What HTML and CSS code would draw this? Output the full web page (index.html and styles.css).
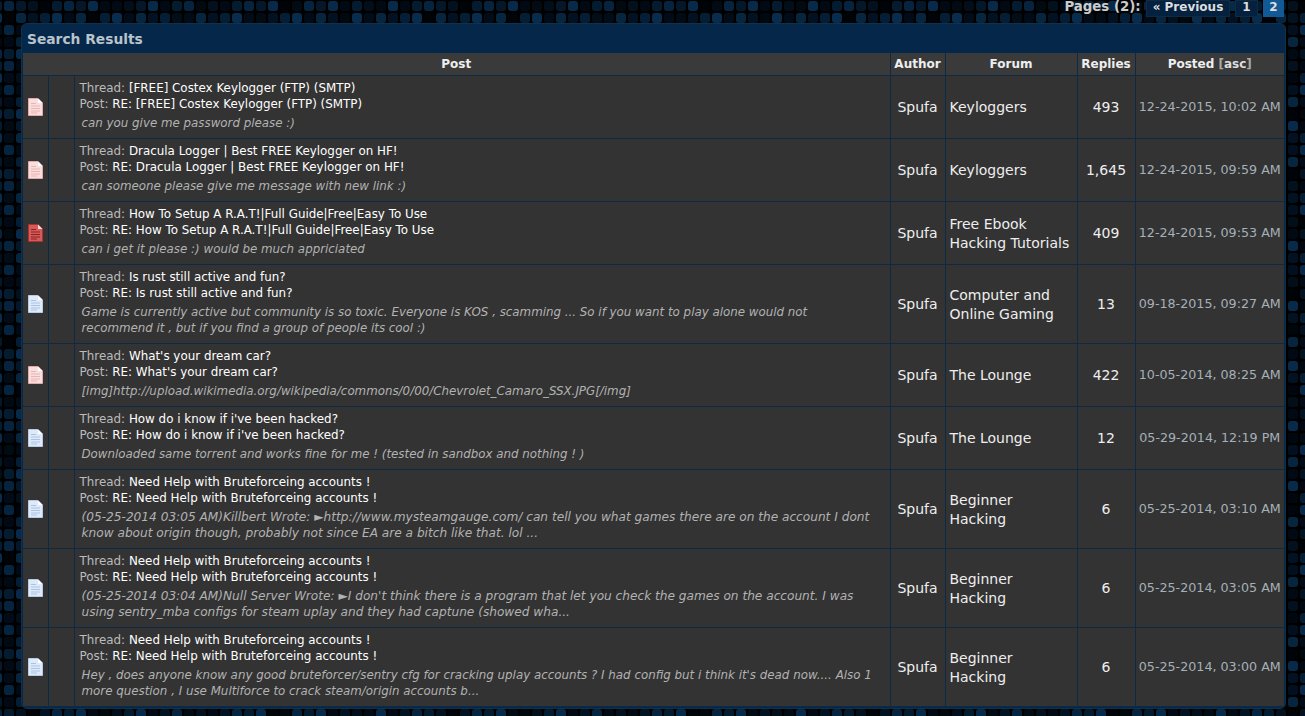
FILE: index.html
```html
<!DOCTYPE html>
<html lang="en">
<head>
    <meta charset="UTF-8">
    <title>Search Results</title>
    <link rel="stylesheet" href="styles.css">
</head>
<body>
    <svg class="page-bg" width="1305" height="716">
        <defs>
            <pattern id="dots" width="60" height="60" patternUnits="userSpaceOnUse" patternTransform="translate(4 1)">
                <rect width="60" height="60" fill="#000"/>
                <rect x="0" y="0" width="10" height="10" rx="3" fill="#06243f"/>
                <rect x="12" y="0" width="10" height="10" rx="3" fill="#04182a"/>
                <rect x="24" y="0" width="10" height="10" rx="3" fill="#072a4a"/>
                <rect x="36" y="0" width="10" height="10" rx="3" fill="#010a14"/>
                <rect x="48" y="0" width="10" height="10" rx="3" fill="#041c32"/>
                <rect x="0" y="12" width="10" height="10" rx="3" fill="#010c18"/>
                <rect x="12" y="12" width="10" height="10" rx="3" fill="#06263f"/>
                <rect x="24" y="12" width="10" height="10" rx="3" fill="#021222"/>
                <rect x="36" y="12" width="10" height="10" rx="3" fill="#041e36"/>
                <rect x="48" y="12" width="10" height="10" rx="3" fill="#072c4e"/>
                <rect x="0" y="24" width="10" height="10" rx="3" fill="#052440"/>
                <rect x="12" y="24" width="10" height="10" rx="3" fill="#010a14"/>
                <rect x="24" y="24" width="10" height="10" rx="3" fill="#020f1e"/>
                <rect x="36" y="24" width="10" height="10" rx="3" fill="#072a4a"/>
                <rect x="48" y="24" width="10" height="10" rx="3" fill="#010c18"/>
                <rect x="0" y="36" width="10" height="10" rx="3" fill="#010a14"/>
                <rect x="12" y="36" width="10" height="10" rx="3" fill="#041e36"/>
                <rect x="24" y="36" width="10" height="10" rx="3" fill="#06263f"/>
                <rect x="36" y="36" width="10" height="10" rx="3" fill="#010c18"/>
                <rect x="48" y="36" width="10" height="10" rx="3" fill="#03182a"/>
                <rect x="0" y="48" width="10" height="10" rx="3" fill="#041c30"/>
                <rect x="12" y="48" width="10" height="10" rx="3" fill="#072a4a"/>
                <rect x="24" y="48" width="10" height="10" rx="3" fill="#010a14"/>
                <rect x="36" y="48" width="10" height="10" rx="3" fill="#021424"/>
                <rect x="48" y="48" width="10" height="10" rx="3" fill="#06243f"/>
            </pattern>
            <pattern id="shade" width="84" height="108" patternUnits="userSpaceOnUse" patternTransform="translate(4 1)">
                <rect x="0" y="12" width="10" height="10" fill="#000" fill-opacity=".7"/>
                <rect x="24" y="0" width="22" height="10" fill="#000" fill-opacity=".6"/>
                <rect x="48" y="36" width="34" height="10" fill="#000" fill-opacity=".65"/>
                <rect x="12" y="60" width="22" height="22" fill="#000" fill-opacity=".6"/>
                <rect x="60" y="84" width="10" height="22" fill="#000" fill-opacity=".7"/>
            </pattern>
            <symbol id="doc" viewBox="0 0 15 18">
                <path class="doc-body" d="M.5.5h9.500l4.500 4.500v12.500h-14z"/>
                <path class="doc-fold" d="M10 .5v4.500h4.500z"/>
                <path class="doc-lines" d="M3 5.500h5M3 8h9M3 10.500h9M3 13h9M3 15h6"/>
            </symbol>
        </defs>
        <rect width="1305" height="716" fill="url(#dots)"/>
        <rect width="1305" height="716" fill="url(#shade)"/>
    </svg>

    <div class="pagination">
        <span class="pages-label">Pages (2):</span>
        <a class="page-link prev">« Previous</a>
        <a class="page-link">1</a>
        <span class="page-current">2</span>
    </div>

    <div class="panel">
        <div class="panel-title">Search Results</div>
        <table class="results">
            <colgroup>
                <col class="c-icon"><col class="c-icon2"><col class="c-post"><col class="c-author"><col class="c-forum"><col class="c-replies"><col class="c-date">
            </colgroup>
            <thead>
                <tr>
                    <th colspan="3">Post</th>
                    <th>Author</th>
                    <th>Forum</th>
                    <th>Replies</th>
                    <th>Posted <span class="sort">[<a>asc</a>]</span></th>
                </tr>
            </thead>
            <tbody>
                <tr>
                    <td class="icon"><svg class="doc hot" width="15" height="18"><use href="#doc"/></svg></td>
                    <td></td>
                    <td class="post">
                        <div>Thread: <a>[FREE] Costex Keylogger (FTP) (SMTP)</a></div>
                        <div>Post: <a>RE: [FREE] Costex Keylogger (FTP) (SMTP)</a></div>
                        <p>can you give me password please :)</p>
                    </td>
                    <td class="author">Spufa</td>
                    <td class="forum">Keyloggers</td>
                    <td class="replies">493</td>
                    <td class="date">12-24-2015, 10:02 AM</td>
                </tr>
                <tr>
                    <td class="icon"><svg class="doc hot" width="15" height="18"><use href="#doc"/></svg></td>
                    <td></td>
                    <td class="post">
                        <div>Thread: <a>Dracula Logger | Best FREE Keylogger on HF!</a></div>
                        <div>Post: <a>RE: Dracula Logger | Best FREE Keylogger on HF!</a></div>
                        <p>can someone please give me message with new link :)</p>
                    </td>
                    <td class="author">Spufa</td>
                    <td class="forum">Keyloggers</td>
                    <td class="replies">1,645</td>
                    <td class="date">12-24-2015, 09:59 AM</td>
                </tr>
                <tr>
                    <td class="icon"><svg class="doc fire" width="15" height="18"><use href="#doc"/></svg></td>
                    <td></td>
                    <td class="post">
                        <div>Thread: <a>How To Setup A R.A.T!|Full Guide|Free|Easy To Use</a></div>
                        <div>Post: <a>RE: How To Setup A R.A.T!|Full Guide|Free|Easy To Use</a></div>
                        <p>can i get it please :) would be much appriciated</p>
                    </td>
                    <td class="author">Spufa</td>
                    <td class="forum">Free Ebook<br>Hacking Tutorials</td>
                    <td class="replies">409</td>
                    <td class="date">12-24-2015, 09:53 AM</td>
                </tr>
                <tr>
                    <td class="icon"><svg class="doc" width="15" height="18"><use href="#doc"/></svg></td>
                    <td></td>
                    <td class="post">
                        <div>Thread: <a>Is rust still active and fun?</a></div>
                        <div>Post: <a>RE: Is rust still active and fun?</a></div>
                        <p>Game is currently active but community is so toxic. Everyone is KOS , scamming ... So if you want to play alone would not recommend it , but if you find a group of people its cool :)</p>
                    </td>
                    <td class="author">Spufa</td>
                    <td class="forum">Computer and<br>Online Gaming</td>
                    <td class="replies">13</td>
                    <td class="date">09-18-2015, 09:27 AM</td>
                </tr>
                <tr>
                    <td class="icon"><svg class="doc hot" width="15" height="18"><use href="#doc"/></svg></td>
                    <td></td>
                    <td class="post">
                        <div>Thread: <a>What's your dream car?</a></div>
                        <div>Post: <a>RE: What's your dream car?</a></div>
                        <p>[img]http://upload.wikimedia.org/wikipedia/commons/0/00/Chevrolet_Camaro_SSX.JPG[/img]</p>
                    </td>
                    <td class="author">Spufa</td>
                    <td class="forum">The Lounge</td>
                    <td class="replies">422</td>
                    <td class="date">10-05-2014, 08:25 AM</td>
                </tr>
                <tr>
                    <td class="icon"><svg class="doc" width="15" height="18"><use href="#doc"/></svg></td>
                    <td></td>
                    <td class="post">
                        <div>Thread: <a>How do i know if i've been hacked?</a></div>
                        <div>Post: <a>RE: How do i know if i've been hacked?</a></div>
                        <p>Downloaded same torrent and works fine for me ! (tested in sandbox and nothing ! )</p>
                    </td>
                    <td class="author">Spufa</td>
                    <td class="forum">The Lounge</td>
                    <td class="replies">12</td>
                    <td class="date">05-29-2014, 12:19 PM</td>
                </tr>
                <tr>
                    <td class="icon"><svg class="doc" width="15" height="18"><use href="#doc"/></svg></td>
                    <td></td>
                    <td class="post">
                        <div>Thread: <a>Need Help with Bruteforceing accounts !</a></div>
                        <div>Post: <a>RE: Need Help with Bruteforceing accounts !</a></div>
                        <p class="quoted">(05-25-2014 03:05 AM)Killbert Wrote: ►http://www.mysteamgauge.com/ can tell you what games there are on the account I dont know about origin though, probably not since EA are a bitch like that. lol ...</p>
                    </td>
                    <td class="author">Spufa</td>
                    <td class="forum">Beginner<br>Hacking</td>
                    <td class="replies">6</td>
                    <td class="date">05-25-2014, 03:10 AM</td>
                </tr>
                <tr>
                    <td class="icon"><svg class="doc" width="15" height="18"><use href="#doc"/></svg></td>
                    <td></td>
                    <td class="post">
                        <div>Thread: <a>Need Help with Bruteforceing accounts !</a></div>
                        <div>Post: <a>RE: Need Help with Bruteforceing accounts !</a></div>
                        <p class="quoted">(05-25-2014 03:04 AM)Null Server Wrote: ►I don't think there is a program that let you check the games on the account. I was using sentry_mba configs for steam uplay and they had captune (showed wha...</p>
                    </td>
                    <td class="author">Spufa</td>
                    <td class="forum">Beginner<br>Hacking</td>
                    <td class="replies">6</td>
                    <td class="date">05-25-2014, 03:05 AM</td>
                </tr>
                <tr>
                    <td class="icon"><svg class="doc" width="15" height="18"><use href="#doc"/></svg></td>
                    <td></td>
                    <td class="post">
                        <div>Thread: <a>Need Help with Bruteforceing accounts !</a></div>
                        <div>Post: <a>RE: Need Help with Bruteforceing accounts !</a></div>
                        <p>Hey , does anyone know any good bruteforcer/sentry cfg for cracking uplay accounts ? I had config but i think it's dead now.... Also 1 more question , I use Multiforce to crack steam/origin accounts b...</p>
                    </td>
                    <td class="author">Spufa</td>
                    <td class="forum">Beginner<br>Hacking</td>
                    <td class="replies">6</td>
                    <td class="date">05-25-2014, 03:00 AM</td>
                </tr>
            </tbody>
        </table>
    </div>
</body>
</html>
```

FILE: styles.css
```css
body {
    margin: 0;
    height: 716px;
    overflow: hidden;
    background: #000;
    color: #bbb;
    font-family: "DejaVu Sans", Verdana, sans-serif;
    font-size: 11.9px;
}
.page-bg {
    position: absolute;
    left: 0;
    top: 0;
    z-index: -1;
}
.pagination {
    height: 17px;
    margin-bottom: 6px;
    padding-right: 21px;
    display: flex;
    justify-content: flex-end;
    align-items: flex-start;
    gap: 5px;
    font-weight: 700;
    font-size: 12px;
    line-height: 14px;
    color: #ccc;
}
.pages-label { font-size: 13.300px; }
.page-link {
    padding: 0 6px;
    height: 17px;
    line-height: 13px;
    background: #04223f;
    color: #ddd;
    border: 1px solid #112a40;
    box-sizing: border-box;
}
.page-current {
    padding: 0 6.500px;
    height: 17px;
    line-height: 14px;
    background: #125a96;
    color: #ddd;
}
.panel {
    margin-left: 21px;
    width: 1265px;
    box-sizing: border-box;
    padding: 0 1px 1px;
    background: #04274a;
    border: 1px solid #12304a;
    border-radius: 6px;
    overflow: hidden;
}
.panel-title {
    height: 29px;
    line-height: 31px;
    padding-left: 4px;
    font-size: 13.800px;
    font-weight: 700;
    color: #b9c3cb;
}
.results {
    width: 1261px;
    table-layout: fixed;
    border-collapse: collapse;
    background: #333;
}
.c-icon { width: 25px; }
.c-icon2 { width: 26px; }
.c-post { width: 816px; }
.c-author { width: 55px; }
.c-forum { width: 132px; }
.c-replies { width: 58px; }
th {
    height: 22px;
    padding: 0;
    background: #3a3a3a;
    color: #eee;
    font-size: 12px;
    font-weight: 700;
    border-left: 1px solid #0c2a44;
    border-bottom: 1px solid #0c2a44;
}
th:first-child { border-left: 0; }
.sort { color: #aaa; }
.sort a { color: #ddd; }
td {
    padding: 4px 5px;
    border: 1px solid #0c2a44;
    vertical-align: middle;
    line-height: 16px;
}
td:first-child { border-left: 0; }
td:last-child { border-right: 0; }
td.post { padding: 4px 5px 7px; }
.icon { padding: 0; }
.doc {
    display: block;
    margin: 0 auto;
    --doc-fill: #dfeaf9;
    --doc-edge: #b5cbe6;
    --doc-text: #a9c3e6;
    --doc-corner: #fff;
}
.doc.hot {
    --doc-fill: #f9dede;
    --doc-edge: #e0aaaa;
    --doc-text: #eab4b4;
}
.doc.fire {
    --doc-fill: #d55a5a;
    --doc-edge: #a83232;
    --doc-text: #8f2020;
    --doc-corner: #f7dada;
}
.doc-body { fill: var(--doc-fill); stroke: var(--doc-edge); }
.doc-fold { fill: var(--doc-corner); }
.doc-lines { fill: none; stroke: var(--doc-text); }
.post a { color: #fff; }
.post p {
    width: 796px;
    margin: 3px 0 0 2px;
    font-style: italic;
    font-size: 11.850px;
    line-height: 16px;
    color: #b2b2b2;
}
.post p.quoted { font-size: 12.150px; }
.author, .forum {
    font-size: 14px;
    line-height: 19px;
    color: #eee;
}
.author { text-align: center; }
td.forum { padding: 5px 5px 4px 4px; }
.replies {
    text-align: center;
    font-size: 14px;
    color: #eee;
}
.date {
    text-align: center;
    white-space: nowrap;
    padding: 0;
    font-size: 12.700px;
    color: #a5b0b8;
}
```
